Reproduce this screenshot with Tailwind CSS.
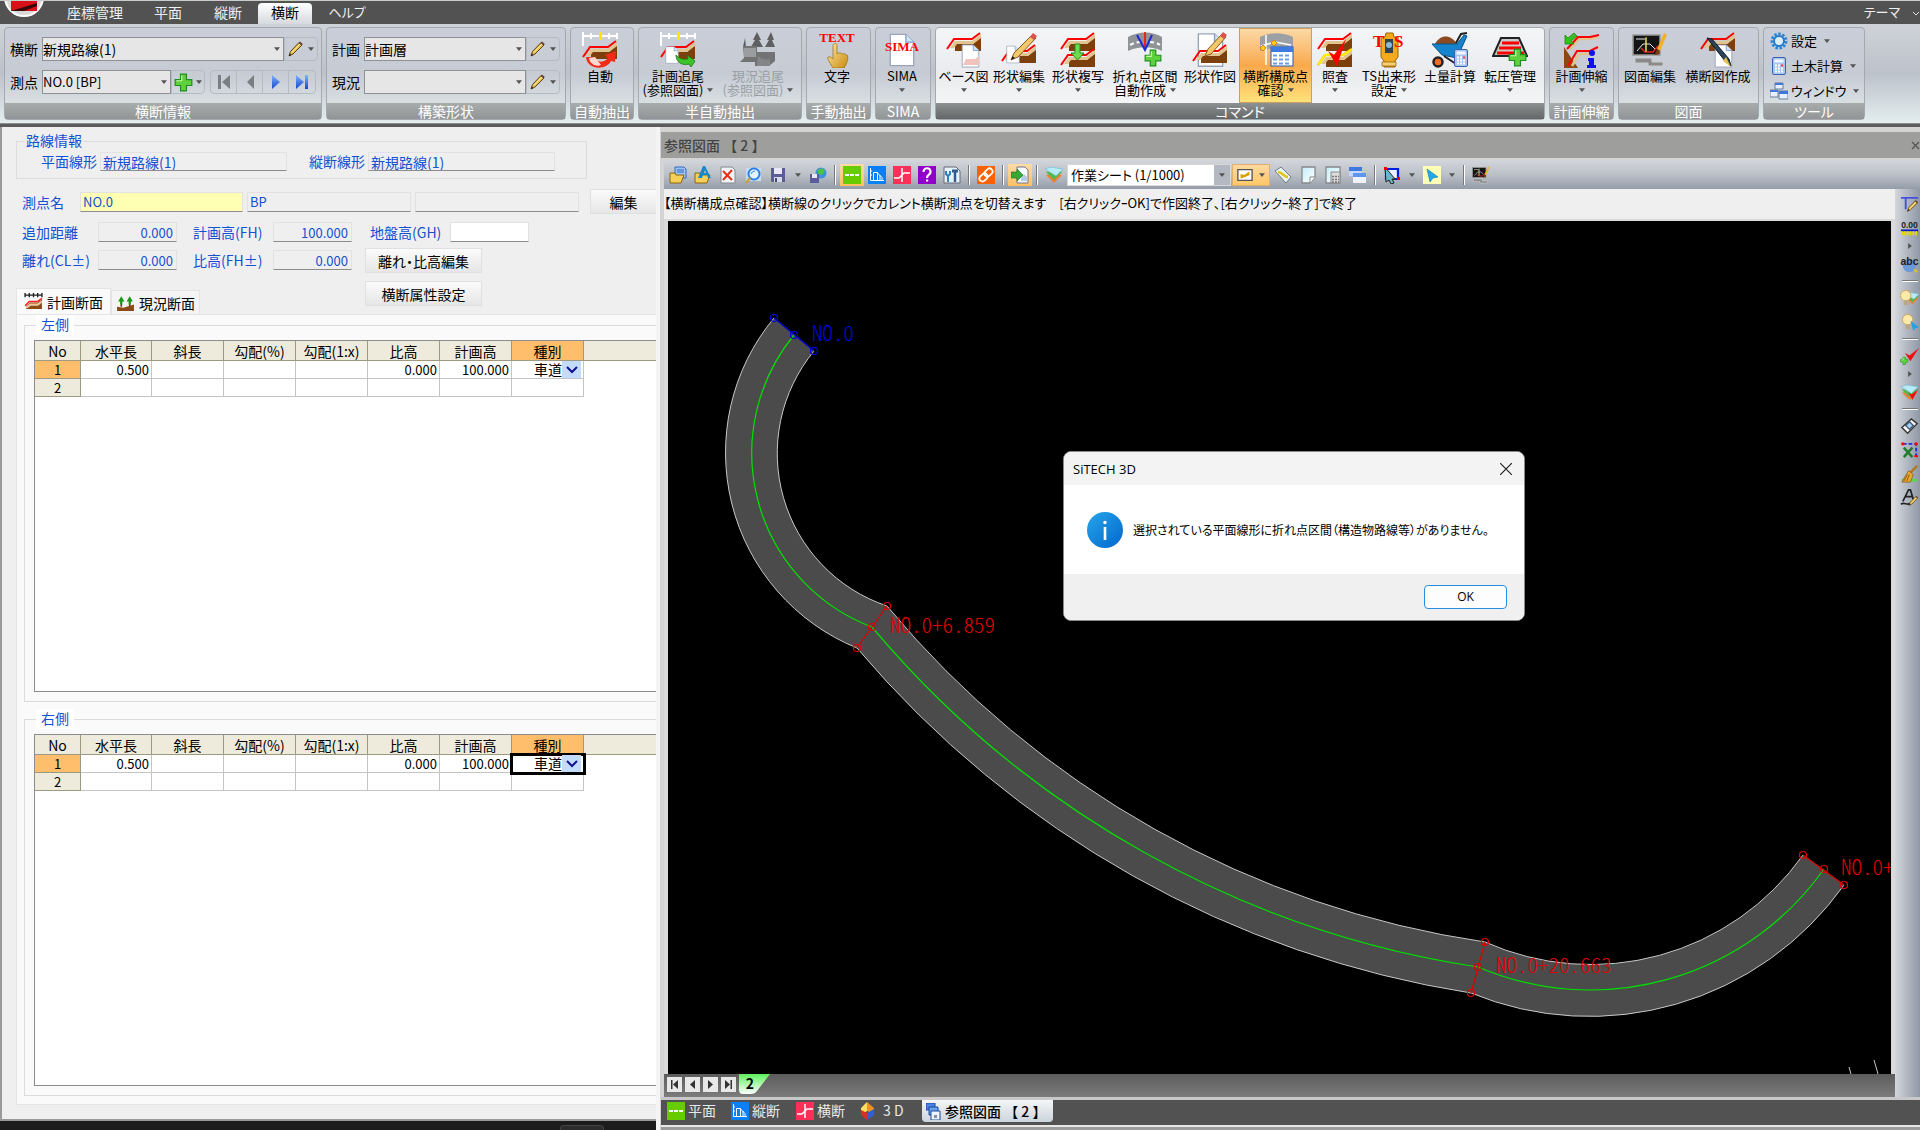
<!DOCTYPE html>
<html lang="ja">
<head>
  <meta charset="UTF-8" />
  <meta name="viewport" content="width=device-width, initial-scale=1.0" />
  <title>SiTECH 3D</title>
  <script src="https://cdn.jsdelivr.net/npm/@tailwindcss/browser@4"></script>
  <style>
    body {
      font-family: "Noto Sans CJK JP", sans-serif;
      font-feature-settings: "palt";
    }
    .full {
      font-feature-settings: normal;
    }
    .cad {
      font-feature-settings: "hwid";
    }
  </style>
</head>
<body class="h-screen flex flex-col overflow-hidden bg-[#efefef] text-sm leading-[18px] text-black">

  <!-- Gradients must stay rendered, so they live apart from the hidden sprite -->
  <svg class="absolute size-0">
    <defs>
      <linearGradient id="g-blue" x1="0" y1="0" x2="0" y2="1"><stop offset="0" stop-color="#7db4ff" /><stop offset="1" stop-color="#1546c8" /></linearGradient>
      <linearGradient id="g-gold" x1="0" y1="0" x2="1" y2="1"><stop offset="0" stop-color="#ffe9a0" /><stop offset="1" stop-color="#c98a10" /></linearGradient>
      <linearGradient id="g-info" x1="0" y1="0" x2="1" y2="1"><stop offset="0" stop-color="#27a5e8" /><stop offset="1" stop-color="#0067cf" /></linearGradient>
      <linearGradient id="g-tab" x1="0" y1="0" x2="0" y2="1"><stop offset="0" stop-color="#5cf05c" /><stop offset="1" stop-color="#ffffff" /></linearGradient>
      <linearGradient id="g-sheet" x1="0" y1="0" x2="1" y2="1"><stop offset="0" stop-color="#c4f0fa" /><stop offset="1" stop-color="#ffffff" /></linearGradient>
    </defs>
  </svg>

  <!-- Icon sprite -->
  <svg class="hidden">
    <!-- shared parts -->
    <symbol id="sec" viewBox="0 0 36 20" overflow="visible"><path d="M9 12h18l8-7v14H9z" fill="#7d3f0c" /><path d="M4 16 9 9h17l9-7v4l-8 6H11l-3 4z" fill="#e2c48e" /><path d="M1 17 8 7h18l8-6" fill="none" stroke="#f00" stroke-width="2" /></symbol>
    <symbol id="page" viewBox="0 0 20 26" overflow="visible"><path d="M1 1h12l6 6v18H1z" fill="#fff" stroke="#9aa4b8" /><path d="M13 1v6h6" fill="#cfe6fb" stroke="#7f9cc4" /></symbol>
    <symbol id="pencil" viewBox="0 0 16 16"><path d="M1 15 2.500 10.500 11 1.500l3 2.500L5 13z" fill="#e8bc48" stroke="#5a4418" /><path d="M10.500 2 12 .6l2.800 2.300L13.500 4.500z" fill="#6b4038" /><path d="M1 15l.8-2.600 1.600 1.500z" fill="#222" /><path d="M4 11.500 12 3" stroke="#fff4b8" /></symbol>
    <symbol id="plus" viewBox="0 0 16 16"><path d="M5.500 1h5v4.500H15v5h-4.500V15h-5v-4.500H1v-5h4.500z" fill="#5fd13c" stroke="#1d8f1d" /><path d="M6.500 2v4.500H2" fill="none" stroke="#c9f7b0" /></symbol>
    <symbol id="ruler" viewBox="0 0 36 14"><path d="M1 0v14M1 4h34M9 1v6M27 1v6M35 1v6" stroke="#fff" stroke-width="2" fill="none" /><path d="M17 0h3v8h-3z" fill="#ffe600" /></symbol>
    <symbol id="calc" viewBox="0 0 14 18"><rect x=".5" y=".5" width="13" height="17" rx="1.500" fill="#a9c4ee" stroke="#3d63b0" /><rect x="2.500" y="2.500" width="9" height="3" fill="#f2f7ff" /><path d="M3 8.500h8M3 11.500h8M3 14.500h8" stroke="#fff" stroke-width="2" stroke-dasharray="2 1" /><path d="M9 8.500h2" stroke="#e33" stroke-width="2" /></symbol>
    <symbol id="dn" viewBox="0 0 8 5"><path d="M0 0h8L4 5z" fill="#555" /></symbol>
    <symbol id="rt" viewBox="0 0 5 8"><path d="M0 0v8l5-4z" fill="#555" /></symbol>

    <!-- ribbon icons, 36 x 36 -->
    <symbol id="r-auto" viewBox="0 0 36 36"><use href="#ruler" width="36" height="14" /><use href="#sec" y="8" width="36" height="20" /><path d="M4 25c1 13 20 14 25 4l4 1 1-11-11 4 3 3c-5 6-12 4-13-1z" fill="#f22a16" /><path d="M7 26c1 7 8 9 12 7l-6-8z" fill="#ffd9d0" /></symbol>
    <symbol id="r-plan" viewBox="0 0 36 36"><use href="#ruler" width="36" height="14" /><use href="#sec" y="8" width="36" height="20" /><use href="#page" x="5" y="14" width="14" height="18" /><path d="M16 23c3 4 9 5 12 4l-1-4 8 6-4 6-2-3c-7 2-13-2-13-9z" fill="#3fc32b" stroke="#15780f" stroke-width=".8" /></symbol>
    <symbol id="r-curr" viewBox="0 0 36 36"><path d="M3 15l2-9 1 9M17 0l-4 8h2l-4 7h12l-4-7h2zM31 0l-4 8h2l-4 7h10l-3-7h2z" fill="#444" /><path d="M3 14h14v6h18v9l-6 5H15v-4H0l4-4z" fill="#5e5e5e" /><path d="M4 16h12v9H4z" fill="#929292" /><path d="M18 24c4 4 8 4 12 3v7H17z" fill="#747474" /></symbol>
    <symbol id="r-text" viewBox="0 0 36 36"><text x="18" y="10" text-anchor="middle" font-family="Liberation Serif" font-weight="bold" font-size="13" fill="#f00">TEXT</text><path d="M14 13c1-2 4-2 4 0v9c2-2 4-1 5 0 3-1 4 1 5 1 2 2 0 9-3 13H14c-2-4-6-8-5-11 2-1 4 1 5 2z" fill="url(#g-gold)" stroke="#9a6a10" stroke-width=".7" /></symbol>
    <symbol id="r-sima" viewBox="0 0 36 36"><use href="#page" x="5" y="1" width="26" height="34" /><text x="18" y="19" text-anchor="middle" font-family="Liberation Serif" font-weight="bold" font-size="13" fill="#f00">SIMA</text></symbol>
    <symbol id="r-base" viewBox="0 0 36 36"><use href="#sec" width="36" height="20" /><use href="#page" x="15" y="12" width="19" height="24" /><path d="M17 33l3-6h9l4-3v9z" fill="#f0c4bc" /></symbol>
    <symbol id="r-edit" viewBox="0 0 36 36"><use href="#sec" y="12" width="36" height="20" /><use href="#page" x="5" y="13" width="14" height="19" /><path d="M10 28l3-7L31 3l4 3-18 19z" fill="#f3c86b" stroke="#8a5a20" /><path d="M29 5l3-4 4 3-3 4z" fill="#d9534f" /><path d="M10 28l1.500-4 2.500 2z" fill="#222" /></symbol>
    <symbol id="r-copy" viewBox="0 0 36 36"><use href="#sec" width="36" height="20" /><use href="#sec" y="16" width="36" height="20" /><path d="M15 12h5v9h4l-6.500 7L11 21h4z" fill="#6ddc4c" stroke="#1d8f1d" /></symbol>
    <symbol id="r-fold" viewBox="0 0 36 36"><path d="M1 5c11-6 24-6 34 0v14c-10-5-24-5-34 0z" fill="#8f9396" /><path d="M3 13c4-2 7-3 10-3M23 10c4 0 7 1 10 3" stroke="#fff" stroke-width="2" stroke-dasharray="4 3" fill="none" /><path d="M18 0v18" stroke="#f00" stroke-width="1.500" /><path d="M10 3l8 15 7-15" stroke="#1b2bd8" stroke-width="2" fill="none" /><use href="#plus" x="17" y="17" width="18" height="18" /></symbol>
    <symbol id="r-draw" viewBox="0 0 36 36"><use href="#page" x="5" y="0" width="27" height="36" /><use href="#sec" y="12" width="36" height="20" /><path d="M13 24l3-7L30 2l4 3-15 17z" fill="#f3c86b" stroke="#8a5a20" /><path d="M28 4l3-4 4 3-3 4z" fill="#d9534f" /></symbol>
    <symbol id="r-conf" viewBox="0 0 36 36"><path d="M2 5c10-5 23-5 33 0v14c-10-4-23-4-33 0z" fill="#9ba0a4" /><path d="M8 3v30M3 14l14-4 16 3" stroke="#fff" stroke-width="1.500" fill="none" /><path d="M2 16l3-3 3 3-3 3zM13 11l3-3 3 3-3 3z" fill="#ffcf20" stroke="#e08000" /><rect x="13" y="15" width="22" height="19" fill="#fff" stroke="#2458b8" /><path d="M13 15h22v5H13z" fill="#3e7be0" /><path d="M15 23.500h18M15 27.500h18M15 31.500h18" stroke="#6e9be8" stroke-width="2" stroke-dasharray="4 2" /></symbol>
    <symbol id="r-chk" viewBox="0 0 36 36"><use href="#sec" width="36" height="20" /><use href="#sec" y="16" width="36" height="20" /><path d="M1 33l7-10h18l9-6" stroke="#ffee00" stroke-width="2.400" fill="none" /><path d="M11 19l6 4L29 7l-9 27z" fill="#f00" /></symbol>
    <symbol id="r-ts" viewBox="0 0 36 36"><path d="M10 5h4l1-4h7l1 4h4v20l-3 4v6H13v-6l-3-4z" fill="#f3ab1e" stroke="#9a6408" /><rect x="14" y="7" width="8" height="14" fill="#33424f" /><circle cx="18" cy="13" r="3" fill="#8fb8e0" /><path d="M11 30h14v4H11z" fill="#f8d070" stroke="#8a5a08" stroke-width=".7" /><text x="2" y="15" font-family="Liberation Serif" font-weight="bold" font-size="17" fill="#f00">T</text><text x="23" y="15" font-family="Liberation Serif" font-weight="bold" font-size="17" fill="#f00">S</text></symbol>
    <symbol id="r-soil" viewBox="0 0 36 36"><path d="M3 12C8 2 19 2 25 12l-4 4H6z" fill="#8b4a22" /><path d="M0 12h25l7-9 3 1-10 22-15-3z" fill="#1684cc" stroke="#075487" /><path d="M24 11l5-9 6-1M12 24l12 8" stroke="#222" stroke-width="2" fill="none" /><circle cx="6" cy="30" r="4.500" fill="#f06a28" stroke="#222" stroke-width="2.500" /><use href="#calc" x="22" y="17" width="14" height="18" /></symbol>
    <symbol id="r-roll" viewBox="0 0 36 36"><path d="M9 6h18l8 18H1z" fill="#c9c9c9" stroke="#222" stroke-width="2" /><path d="M10 11h17M7 16h22M5 21h27" stroke="#f00" stroke-width="3" /><use href="#plus" x="16" y="16" width="19" height="19" /></symbol>
    <symbol id="r-stretch" viewBox="0 0 36 36"><path d="M0 36V15l14 21z" fill="#8a4a14" /><path d="M6 18l9-11h11l8-2M8 34l7-12h12" stroke="#e2c48e" stroke-width="2.500" fill="none" /><path d="M3 17l11-12h12l9-2M4 34l9-15h13l8-4" stroke="#f00" stroke-width="2" fill="none" /><path d="M10 1 4 6 1 3v9h9L7 9l6-5z" fill="#34c41e" stroke="#12780a" stroke-width=".7" /><circle cx="28" cy="21" r="3" fill="#1010f0" /><path d="M24 26h6v7h2v3h-9v-3h2v-4h-1z" fill="#1010f0" /></symbol>
    <symbol id="r-zu" viewBox="0 0 36 36"><rect x="1" y="3" width="27" height="20" fill="#151515" stroke="#999" stroke-width="1.500" /><path d="M4 7h9M14 6v13M5 19l6-7h7l5 5" stroke="#e8e8e8" fill="none" /><path d="M9 16l4 4h8l5-6" stroke="#e02020" fill="none" stroke-width="1.500" /><path d="M14 5v15" stroke="#e8e020" /><path d="M3 26h17v4h11v4H16v-3H3z" fill="#8a8a8a" stroke="#ccc" /><path d="M32 1l3 2-7 16-3-2z" fill="#f2b028" /><path d="M25 17l3 2c-1 4-3 4-6 4 2-2 2-4 3-6z" fill="#7a3d10" /></symbol>
    <symbol id="r-make" viewBox="0 0 36 36"><use href="#sec" width="36" height="20" /><use href="#page" x="14" y="12" width="19" height="24" /><path d="M7 6l5 1 17 20 2 7-6-5z" fill="#2b4658" stroke="#0c1c28" /><path d="M26 25l5 10-8-6z" fill="#e8c050" /></symbol>

    <!-- small icons, 18 x 18 -->
    <symbol id="t-open" viewBox="0 0 18 18"><path d="M6 1h9l2 2v9H6z" fill="#9cc4f8" stroke="#3468b8" /><path d="M8 4h7M8 6h7" stroke="#3468b8" /><path d="M1 7h5l1 2h8l-3 8H1z" fill="#f6cf58" stroke="#8a6410" /></symbol>
    <symbol id="t-opena" viewBox="0 0 18 18"><path d="M1 7h5l1 2h9l-3 8H1z" fill="#f6cf58" stroke="#8a6410" /><path d="M4 12 9 0h2l6 12h-3l-1-3H9l-1 3zM10 7h2l-1-3z" fill="#1888c8" /></symbol>
    <symbol id="t-del" viewBox="0 0 18 18"><path d="M2 1h11l3 3v13H2z" fill="#eef5fb" stroke="#888" /><path d="M4 5l9 9M13 4l-9 10" stroke="#e83018" stroke-width="2" /></symbol>
    <symbol id="t-find" viewBox="0 0 18 18"><path d="M2 2h15v13H2z" fill="#c4dcf8" /><circle cx="10" cy="8" r="5.500" fill="#e4f6ff" stroke="#2a80e8" stroke-width="2" /><path d="M7 8q1-3 4-3" stroke="#2a80e8" fill="none" /><path d="M6 12l-4 5" stroke="#c8a040" stroke-width="2.500" /></symbol>
    <symbol id="t-save" viewBox="0 0 18 18"><path d="M2 2h14v14H3l-1-1z" fill="#5b5a9c" /><path d="M5 2h8v6H5z" fill="#e8e8f8" /><path d="M5 11h8v5H5z" fill="#d8d8e8" /><path d="M6 12h2v4H6z" fill="#444488" /></symbol>
    <symbol id="t-net" viewBox="0 0 18 18"><circle cx="12" cy="7" r="5.500" fill="#3f8fe0" /><path d="M9 4l4-2 3 3-3 4-4-1z" fill="#4cc04c" /><path d="M1 8h9v9H1z" fill="#5b5a9c" /><path d="M3 8h5v4H3z" fill="#e8e8f8" /></symbol>
    <symbol id="t-green" viewBox="0 0 18 18"><path d="M0 0h18v18H0z" fill="#66cc00" /><path d="M2 9h14" stroke="#fff" stroke-width="2" stroke-dasharray="4 1" /></symbol>
    <symbol id="t-blue" viewBox="0 0 18 18"><path d="M0 0h18v18H0z" fill="#0a80f8" /><path d="M2.500 2v12.500H16M5.500 14V6.500h4V14M9 6.500l5 5V14M12 9v5M2 5h2M2 9h2" stroke="#fff" fill="none" /></symbol>
    <symbol id="t-red" viewBox="0 0 18 18"><path d="M0 0h18v18H0z" fill="#fa3058" /><path d="M9 2v14M1 12h5l5-5h6" stroke="#fff" stroke-width="1.500" fill="none" /></symbol>
    <symbol id="t-help" viewBox="0 0 18 18"><path d="M0 0h18v18H0z" fill="#9000c8" /><path d="M5.500 6c0-5 7-5 7 0 0 3-3.500 2.500-3.500 6" stroke="#fff" stroke-width="2.200" fill="none" /><path d="M8 13.500h2.200v2H8z" fill="#fff" /></symbol>
    <symbol id="t-tool" viewBox="0 0 18 18"><path d="M1 1h12l4 4v12H1z" fill="#e6f2fb" stroke="#667" /><path d="M12 6v10" stroke="#345a90" stroke-width="2.500" /><path d="M9 5h6" stroke="#345a90" stroke-width="3" /><path d="M5 9v7M3 5v3l2 2 2-2V5" stroke="#3080c0" stroke-width="2" fill="none" /></symbol>
    <symbol id="t-link" viewBox="0 0 18 18"><path d="M0 0h18v18H0z" fill="#ff6000" /><g transform="rotate(-45 9 9)" fill="none" stroke="#fff" stroke-width="1.800"><rect x="1" y="6" width="9" height="6" rx="3" /><rect x="8" y="6" width="9" height="6" rx="3" /></g></symbol>
    <symbol id="t-imp" viewBox="0 0 18 18"><path d="M6 1h8l3 3v13H6z" fill="#f4faff" stroke="#778" /><path d="M10 11l3-3 3 3v4h-6z" fill="#b8cce0" /><path d="M0 6h6V3l6 6-6 6v-3H0z" fill="#34a834" stroke="#176f17" stroke-width=".6" /></symbol>
    <symbol id="t-layer" viewBox="0 0 18 18"><path d="M1 9l8 8 8-8-5-1z" fill="#f08038" /><path d="M1 6l8 8 8-8-4-2z" fill="#52b848" /><path d="M0 3l6-2 12 2-7 7z" fill="#b8eaf8" stroke="#6ab8d0" stroke-width=".6" /></symbol>
    <symbol id="t-map" viewBox="0 0 18 18"><path d="M1 3h16v12H1z" fill="#fff" stroke="#555" stroke-width="1.500" /><path d="M4 8l4 1 6-4v4l-4 2-6 2z" fill="#d8a000" /></symbol>
    <symbol id="t-tilt" viewBox="0 0 18 18"><path d="M1 5l6-4 10 10-5 6z" fill="#e4f8f0" stroke="#778" /><path d="M4 6c4 0 6 5 10 5" stroke="#e8c010" stroke-width="2.500" fill="none" /></symbol>
    <symbol id="t-sheet" viewBox="0 0 18 18"><path d="M3 1h13v10l-5 6H3z" fill="url(#g-sheet)" stroke="#888" stroke-width="1.300" /><path d="M11 17v-6h5" fill="#fff" stroke="#888" /></symbol>
    <symbol id="t-shcalc" viewBox="0 0 18 18"><path d="M2 1h14v16H2z" fill="url(#g-sheet)" stroke="#888" stroke-width="1.300" /><path d="M7 6h9v11H7z" fill="#ddd" stroke="#888" /><path d="M8 10.500h7M8 13.500h7M8 16h7" stroke="#777" stroke-dasharray="2 1" stroke-width="1.500" /></symbol>
    <symbol id="t-wins" viewBox="0 0 18 18"><path d="M0 1h13v9H0z" fill="#c4d8fc" /><path d="M0 1h13v4H0z" fill="#3f78e0" /><path d="M4 7h13v10H4z" fill="#eef4ff" /><path d="M4 7h13v4H4z" fill="#5f95ee" /></symbol>
    <symbol id="t-sel" viewBox="0 0 18 18"><path d="M3 3h12v10H3z" fill="#e8f0ff" stroke="#0018e0" stroke-width="2.200" /><path d="M2 1l10 12-3 0 2 4-3 1-2-4-3 2z" fill="#68b8c8" stroke="#222" /><path d="M1 1h3v3H1zM14 11h3v3h-3z" fill="#e00" /></symbol>
    <symbol id="t-cur" viewBox="0 0 18 18"><path d="M0 0h18v18H0z" fill="#ffffb8" /><path d="M4 3l11 8-5 1-3 4z" fill="#20a8e8" stroke="#0878b0" stroke-width=".6" /></symbol>

    <!-- side bar icons, 20 x 20 -->
    <symbol id="s-pen" viewBox="0 0 20 20"><path d="M1 3h18M6 3v12" stroke="#4850e0" stroke-width="2" /><use href="#pencil" x="7" y="5" width="13" height="13" /></symbol>
    <symbol id="s-dim" viewBox="0 0 20 20"><text x="10" y="9" text-anchor="middle" font-family="Liberation Sans" font-weight="bold" font-size="9" fill="#222">0.00</text><path d="M1 12h18" stroke="#1018c8" stroke-width="2" /><path d="M1 15h18" stroke="#e8d800" stroke-width="4" stroke-dasharray="2 1" /></symbol>
    <symbol id="s-abc" viewBox="0 0 20 20"><circle cx="10" cy="11" r="7" fill="#6a98d8" /><text x="10" y="11" text-anchor="middle" font-family="Liberation Sans" font-weight="bold" font-size="11" fill="#222">abc</text><path d="M15 15l3 3" stroke="#e0c020" stroke-width="2.500" /></symbol>
    <symbol id="s-bulb1" viewBox="0 0 20 20"><use href="#t-layer" x="6" y="3" width="14" height="14" /><circle cx="6" cy="7" r="5.500" fill="#ffe9a8" stroke="#c8a860" /><path d="M4 12h5v5H4z" fill="#b8a888" /></symbol>
    <symbol id="s-bulb2" viewBox="0 0 20 20"><circle cx="8" cy="7" r="5.500" fill="#ffe9a8" stroke="#c8a860" /><path d="M6 12h5v5H6z" fill="#b8a888" /><path d="M11 8l9 7-4 1-2 3z" fill="#28a0e0" /></symbol>
    <symbol id="s-chk1" viewBox="0 0 20 20"><path d="M5 6l5 3L20 1l-9 14z" fill="#f01010" /><use href="#plus" y="10" width="9" height="9" /></symbol>
    <symbol id="s-chk2" viewBox="0 0 20 20"><use href="#t-layer" x="1" y="1" width="18" height="18" /><path d="M9 10l3 2 7-5-6 11z" fill="#f01010" /></symbol>
    <symbol id="s-erase" viewBox="0 0 20 20"><path d="M2 11 12 2l6 5L8 17z" fill="#f8f8f8" stroke="#333" stroke-width="1.500" /><path d="M5 9l5-5 5 5-5 5z" fill="#3a5878" /><path d="M7 9l3-3 3 3-3 3z" fill="#a8d0f0" /></symbol>
    <symbol id="s-cut" viewBox="0 0 20 20"><path d="M3 3h14v13" stroke="#2030e0" stroke-width="2" fill="none" stroke-dasharray="4 2" /><path d="M4 7l9 10M13 7 4 17" stroke="#1f7a2a" stroke-width="2.500" /><circle cx="3" cy="3" r="1.800" fill="#f00" /><circle cx="17" cy="3" r="1.800" fill="#f00" /><path d="M15 16h4" stroke="#f00" stroke-width="2" /></symbol>
    <symbol id="s-broom" viewBox="0 0 20 20"><path d="M2 16h16" stroke="#58d848" stroke-width="3" /><path d="M18 1l-7 7" stroke="#b07820" stroke-width="2.500" /><path d="M9 6l5 4-3 8H2z" fill="#e8a830" stroke="#8a5a10" stroke-width=".8" /><path d="M10 10l-3 7M8 10l-4 7" stroke="#8a5a10" /></symbol>
    <symbol id="s-font" viewBox="0 0 20 20"><path d="M3 13 9 1h2l3 10M6 8h7M1 16c4-3 6 2 10-1" stroke="#222" stroke-width="1.800" fill="none" /><use href="#pencil" x="9" y="7" width="11" height="11" /></symbol>
  </svg>

  <!-- Menu tabs -->
  <header class="relative h-6 shrink-0 overflow-hidden border-t border-[#c8cccc] bg-[#525252] text-[#f0f0f0] flex items-end">
    <svg class="absolute -top-6 left-1 size-10" viewBox="0 0 40 40"><circle cx="20" cy="20" r="19" fill="#d8d8d8" stroke="#fff" stroke-width="2" /><path d="M7 8h26v26H7z" fill="#d81018" /><path d="M7 34l26-8v3L20 34z" fill="#3a0808" /></svg>
    <nav class="flex flex-1 items-end pl-[52px]">
      <a href="#" class="h-[21px] w-[86px] text-center">座標管理</a>
      <a href="#" class="h-[21px] w-[60px] text-center">平面</a>
      <a href="#" class="h-[21px] w-[60px] text-center">縦断</a>
      <a href="#" class="h-[21px] w-[54px] rounded-t bg-linear-to-b from-white to-[#d6dade] text-center text-black">横断</a>
      <a href="#" class="h-[21px] w-[70px] text-center text-[13px]">ヘルプ</a>
    </nav>
    <button class="flex h-[21px] items-start gap-3 text-[13px]">テーマ<svg class="mt-2 h-[5px] w-2" viewBox="0 0 8 5"><path d="M1 1l3 3 3-3" stroke="#ddd" fill="none" /></svg></button>
  </header>

  <!-- Ribbon -->
  <div id="ribbon" class="flex h-[99px] shrink-0 gap-1 bg-linear-to-b from-[#cfd2d8] via-[#bcc2cb] to-[#e4eeee] pt-[3px] pb-[3px] pl-1">
    <section class="flex w-[318px] shrink-0 flex-col rounded border border-[#a4a9af] bg-linear-to-b from-[#c9ced8] via-[#c6cbd4] to-[#e2eaea]">
      <div class="flex flex-1 flex-col justify-center gap-[9px] pl-[5px]">
        <div class="flex h-6 items-center">
          <label for="cross" class="w-8">横断</label>
          <div class="relative h-6 w-[242px]">
            <select id="cross" class="h-6 w-full appearance-none border border-[#8e9296] bg-[#e6e6e6]"><option>新規路線(1)</option></select>
            <svg class="pointer-events-none absolute top-[10px] right-1 h-1 w-[6px]"><use href="#dn" /></svg>
          </div>
          <button class="flex h-6 w-[34px] items-center justify-center gap-1 rounded-r border border-[#b4bcc2]" aria-label="横断編集"><svg class="size-4"><use href="#pencil" /></svg><svg class="h-1 w-[6px]"><use href="#dn" /></svg></button>
        </div>
        <div class="flex h-6 items-center">
          <label for="station" class="w-8">測点</label>
          <div class="relative h-6 w-[129px]">
            <select id="station" class="h-6 w-full appearance-none border border-[#8e9296] bg-[#e6e6e6] text-[13px]"><option>NO.0 [BP]</option></select>
            <svg class="pointer-events-none absolute top-[10px] right-1 h-1 w-[6px]"><use href="#dn" /></svg>
          </div>
          <button class="flex h-6 w-[34px] items-center justify-center gap-[3px] rounded-r border border-[#b4bcc2]" aria-label="測点追加"><svg class="size-[19px]"><use href="#plus" /></svg><svg class="h-1 w-[6px]"><use href="#dn" /></svg></button>
          <div class="ml-[5px] flex h-6 divide-x divide-[#b4bcc2] rounded border border-[#b4bcc2]">
            <button class="flex w-[26px] items-center justify-center" aria-label="先頭"><svg class="size-4" viewBox="0 0 16 16"><path d="M2 1h3v14H2zM14 1v14L6 8z" fill="#7c7f82" /></svg></button>
            <button class="flex w-[26px] items-center justify-center" aria-label="前へ"><svg class="size-4" viewBox="0 0 16 16"><path d="M12 1v14L5 8z" fill="#7c7f82" /></svg></button>
            <button class="flex w-[26px] items-center justify-center" aria-label="次へ"><svg class="size-4" viewBox="0 0 16 16"><path d="M4 1v14l8-7z" fill="url(#g-blue)" /></svg></button>
            <button class="flex w-[26px] items-center justify-center" aria-label="末尾"><svg class="size-4" viewBox="0 0 16 16"><path d="M2 1v14l8-7zM11 1h3v14h-3z" fill="url(#g-blue)" /></svg></button>
          </div>
        </div>
      </div>
      <h2 class="h-4 bg-linear-to-b from-[#a9acac] to-[#929595] text-center leading-4 text-white">横断情報</h2>
    </section>
    <section class="flex w-[240px] shrink-0 flex-col rounded border border-[#a4a9af] bg-linear-to-b from-[#c9ced8] via-[#c6cbd4] to-[#e2eaea]">
      <div class="flex flex-1 flex-col justify-center gap-[9px] pl-[5px]">
        <div class="flex h-6 items-center">
          <label for="plan" class="w-8">計画</label>
          <div class="relative h-6 w-[162px]">
            <select id="plan" class="h-6 w-full appearance-none border border-[#8e9296] bg-[#e6e6e6]"><option>計画層</option></select>
            <svg class="pointer-events-none absolute top-[10px] right-1 h-1 w-[6px]"><use href="#dn" /></svg>
          </div>
          <button class="flex h-6 w-[34px] items-center justify-center gap-1 rounded-r border border-[#b4bcc2]" aria-label="計画編集"><svg class="size-4"><use href="#pencil" /></svg><svg class="h-1 w-[6px]"><use href="#dn" /></svg></button>
        </div>
        <div class="flex h-6 items-center">
          <label for="current" class="w-8">現況</label>
          <div class="relative h-6 w-[162px]">
            <select id="current" class="h-6 w-full appearance-none border border-[#8e9296] bg-[#e6e6e6]"><option></option></select>
            <svg class="pointer-events-none absolute top-[10px] right-1 h-1 w-[6px]"><use href="#dn" /></svg>
          </div>
          <button class="flex h-6 w-[34px] items-center justify-center gap-1 rounded-r border border-[#b4bcc2]" aria-label="現況編集"><svg class="size-4"><use href="#pencil" /></svg><svg class="h-1 w-[6px]"><use href="#dn" /></svg></button>
        </div>
      </div>
      <h2 class="h-4 bg-linear-to-b from-[#a9acac] to-[#929595] text-center leading-4 text-white">構築形状</h2>
    </section>
  </div>
  <div class="h-1 shrink-0 border-t border-[#8a8d8d] bg-[#5c5c5c]"></div>

  <main class="flex min-h-0 flex-1">
    <!-- Left: cross section data -->
    <div class="flex w-[656px] shrink-0 flex-col bg-[#1c1c1c]">
      <div class="flex min-h-0 flex-1 flex-col border-b-2 border-l-2 border-[#9a9a9a] bg-[#efefef] pt-1 pl-[14px] text-[#1450d2]">
        <fieldset class="mr-[69px] flex border border-[#dcdcdc] pt-px pb-[7px] pl-6">
          <legend class="-ml-4 h-5 px-[1px]">路線情報</legend>
          <label for="hline" class="w-[59px]">平面線形</label>
          <input id="hline" readonly value="新規路線(1)" class="h-[19px] w-[187px] border border-[#e2e2e2] border-b-[#8c8c8c] px-[2px] leading-[17px]" />
          <label for="vline" class="ml-[22px] w-[59px]">縦断線形</label>
          <input id="vline" readonly value="新規路線(1)" class="h-[19px] w-[187px] border border-[#e2e2e2] border-b-[#8c8c8c] px-[2px] leading-[17px]" />
        </fieldset>
        <div class="mt-[10px] flex items-center gap-1 pl-[6px]">
          <label for="sname" class="w-[54px]">測点名</label>
          <input id="sname" value="NO.0" class="h-5 w-[163px] border border-[#e2e2e2] border-b-[#8c8c8c] bg-[#ffffb4] px-[2px] text-[13px]" />
          <input aria-label="測点名2" readonly value="BP" class="h-5 w-[164px] border border-[#e2e2e2] border-b-[#8c8c8c] px-[2px] text-[13px]" />
          <input aria-label="測点名3" readonly class="h-5 w-[164px] border border-[#e2e2e2] border-b-[#8c8c8c] px-[2px] text-[13px]" />
          <button class="ml-[7px] h-[25px] flex-1 border border-r-0 border-[#e0e0e0] bg-linear-to-b from-[#fbfbfb] to-[#e6e6e6] text-black">編集</button>
        </div>
        <div class="mt-2 flex">
          <div class="flex w-[349px] flex-col">
            <div class="flex items-center pl-[6px]">
              <label for="add" class="w-[76px]">追加距離</label>
              <input id="add" readonly value="0.000" class="h-5 w-[79px] border border-[#e2e2e2] border-b-[#8c8c8c] px-[3px] text-right text-[13px]" />
              <label for="fh" class="ml-4 w-20">計画高(FH)</label>
              <input id="fh" readonly value="100.000" class="h-5 w-[79px] border border-[#e2e2e2] border-b-[#8c8c8c] px-[3px] text-right text-[13px]" />
            </div>
            <div class="mt-2 flex items-center pl-[6px]">
              <label for="cl" class="w-[76px]">離れ(CL±)</label>
              <input id="cl" readonly value="0.000" class="h-5 w-[79px] border border-[#e2e2e2] border-b-[#8c8c8c] px-[3px] text-right text-[13px]" />
              <label for="fhd" class="ml-4 w-20">比高(FH±)</label>
              <input id="fhd" readonly value="0.000" class="h-5 w-[79px] border border-[#e2e2e2] border-b-[#8c8c8c] px-[3px] text-right text-[13px]" />
            </div>
            <div class="mt-auto flex items-end text-black">
              <button class="flex h-[26px] w-[95px] items-center justify-center gap-1 border border-b-0 border-[#e4e4e4] bg-[#fafafa]">
                <svg class="size-[19px]" viewBox="0 0 18 18"><path d="M1 3h16M1 1v4M5 1v4M9 1v4M13 1v4M17 1v4" stroke="#222" stroke-width="1.300" /><path d="M2 16V13l4-3h7l4-3v9z" fill="#8b4a14" /><path d="M2 15l4-3h7l4-3" stroke="#efc8a0" stroke-width="2" fill="none" /><path d="M1 13l4-4h8l4-3" stroke="#f22" stroke-width="1.500" fill="none" /></svg>計画断面
              </button>
              <button class="flex h-6 w-[89px] items-center justify-center gap-1 border border-b-0 border-[#e4e4e4] bg-[#f4f4f4]">
                <svg class="size-[19px]" viewBox="0 0 18 18"><path d="M5 5v8M13 5v8" stroke="#6a3a10" stroke-width="1.500" /><path d="M5 3l3 5H6v3H4V8H2zM13 3l3 5h-2v3h-2V8h-2z" fill="#189818" /><path d="M1 13l6 1 10-3v6H1z" fill="#8b4a14" /></svg>現況断面
              </button>
            </div>
          </div>
          <div class="flex flex-1 flex-col items-start pb-2">
            <div class="flex items-center pl-[5px]">
              <label for="gh" class="w-20">地盤高(GH)</label>
              <input id="gh" class="h-5 w-[79px] border border-[#e2e2e2] border-b-[#8c8c8c] bg-white px-[3px] text-right text-[13px]" />
            </div>
            <button class="mt-[6px] h-[25px] w-[117px] border border-[#e0e0e0] bg-linear-to-b from-[#fbfbfb] to-[#e6e6e6] text-black">離れ・比高編集</button>
            <button class="mt-2 h-[25px] w-[117px] border border-[#e0e0e0] bg-linear-to-b from-[#fbfbfb] to-[#e6e6e6] text-black">横断属性設定</button>
          </div>
        </div>
        <div id="sides" class="mb-[14px] flex min-h-0 flex-1 flex-col gap-[7px] border border-r-0 border-[#e4e4e4] bg-[#fafafa] pb-2 pl-[7px]"></div>
      </div>
      <div class="flex h-[9px] shrink-0 items-end pl-[560px]"><div class="h-[5px] w-11 rounded-t border border-b-0 border-[#444] bg-[#2c2c2c]"></div></div>
    </div>

    <!-- Right: reference drawing -->
    <div class="flex min-w-0 flex-1 flex-col border-l-4 border-[#f4f4f4] bg-[#d4d4d4] pt-[5px] pl-[1px]">
      <div class="flex h-[26px] shrink-0 items-center justify-between bg-[#9e9f9d] pl-[3px] font-medium text-[#444]">
        <h2 class="full">参照図面 【 2 】</h2>
        <button aria-label="閉じる"><svg class="size-[9px]" viewBox="0 0 9 9"><path d="M1 1l7 7M8 1 1 8" stroke="#555" stroke-width="1.300" /></svg></button>
      </div>
      <div id="toolbar" class="mt-[2px] ml-[3px] flex h-[29px] shrink-0 items-center gap-px bg-linear-to-b from-[#d2d5da] via-[#bcc1c8] to-[#949ca8] pl-[2px]"></div>
      <div class="ml-[3px] flex min-h-0 flex-1">
        <div class="flex min-w-0 flex-1 flex-col bg-[#efefef]">
          <p class="h-[30px] shrink-0 pt-[5px] text-[13px] leading-[18px] whitespace-nowrap">【横断構成点確認】横断線のクリックでカレント横断測点を切替えます　[右クリックｰOK]で作図終了、[右クリックｰ終了]で終了</p>
          <div class="relative min-h-0 flex-1 overflow-hidden border-t-2 border-r-4 border-l-4 border-[#dadada] bg-black">
            <svg class="absolute top-0 left-0 h-full w-full" viewBox="668 221 1223 853" preserveAspectRatio="xMinYMin slice">
              <g fill="#4b4b4b">
                <path d="M774 318A211 211 0 0 0 857 648L887 606A161 161 0 0 1 814 351Z" />
                <path d="M857 648A1008 1008 0 0 0 1471 993L1485 942A958 958 0 0 1 887 606Z" />
                <path d="M1471 993A312 312 0 0 0 1844 885L1803 855A260 260 0 0 1 1485 942Z" />
              </g>
              <path d="M774 318A211 211 0 0 0 857 648A1008 1008 0 0 0 1471 993A312 312 0 0 0 1844 885M1803 855A260 260 0 0 1 1485 942A958 958 0 0 1 887 606A161 161 0 0 1 814 351" fill="none" stroke="#c8c8c8" />
              <path d="M794 335A186 186 0 0 0 872 627A983 983 0 0 0 1478 967A286 286 0 0 0 1824 869" fill="none" stroke="#00e000" stroke-width="1.200" />
              <g fill="none" stroke="#0000e0" stroke-width="1.200"><path d="M774 318l40 33" /><circle cx="774" cy="318" r="3.500" /><circle cx="794" cy="335" r="3.500" /><circle cx="814" cy="351" r="3.500" /></g>
              <g fill="none" stroke="#e00000" stroke-width="1.200">
                <path d="M857 648l30-42M1471 993l14-51M1803 855l41 30" />
                <circle cx="857" cy="648" r="3.500" /><circle cx="872" cy="627" r="3.500" /><circle cx="887" cy="606" r="3.500" />
                <circle cx="1471" cy="993" r="3.500" /><circle cx="1478" cy="967" r="3.500" /><circle cx="1485" cy="942" r="3.500" />
                <circle cx="1803" cy="855" r="3.500" /><circle cx="1824" cy="869" r="3.500" /><circle cx="1844" cy="885" r="3.500" />
              </g>
              <path d="M1849 1067l2 7M1874 1060l4 14" stroke="#c8c8c8" fill="none" />
              <g class="cad" font-size="21" font-weight="300">
                <text x="812" y="341" fill="#0000e0">NO.0</text>
                <text x="890" y="633" fill="#e00000">NO.0+6.859</text>
                <text x="1496" y="973" fill="#e00000">NO.0+20.663</text>
                <text x="1841" y="875" fill="#e00000">NO.0+</text>
              </g>
            </svg>

            <!-- Message box -->
            <div role="dialog" aria-labelledby="dlg-title" class="absolute top-[230px] left-[395px] flex h-[170px] w-[462px] flex-col overflow-hidden rounded-lg border border-[#8a8a8a] bg-white">
              <div class="flex h-[33px] items-center justify-between bg-[#f3f3f3] pr-3 pl-[9px]">
                <h3 id="dlg-title" class="font-['Open_Sans'] text-[13px]">SiTECH 3D</h3>
                <button aria-label="閉じる"><svg class="size-3" viewBox="0 0 12 12"><path d="M0 0l12 12M12 0 0 12" stroke="#222" stroke-width="1.200" /></svg></button>
              </div>
              <div class="flex flex-1 items-center gap-[10px] pl-[23px]">
                <svg class="size-9" viewBox="0 0 36 36"><circle cx="18" cy="18" r="18" fill="url(#g-info)" /><circle cx="18" cy="10.500" r="1.700" fill="#fff" /><path d="M18 15v13" stroke="#fff" stroke-width="2.600" /></svg>
                <p class="text-xs">選択されている平面線形に折れ点区間（構造物路線等）がありません。</p>
              </div>
              <div class="flex h-[46px] items-center justify-end bg-[#f0f0f0] pr-[17px]">
                <button class="h-6 w-[83px] rounded border border-[#2a8ee0] bg-[#fdfdfd] font-['Open_Sans'] text-xs leading-5">OK</button>
              </div>
            </div>
          </div>
          <!-- Sheet tabs -->
          <div class="flex h-[23px] shrink-0 items-start gap-[3px] bg-linear-to-b from-[#5c5c5c] to-[#7c7c7c] pl-[3px]">
            <button class="mt-[3px] flex size-[15px] items-center justify-center bg-[#e8e8e8]" aria-label="先頭シート"><svg class="size-[9px]" viewBox="0 0 9 9"><path d="M1 0h1.500v9H1zM8 0v9L3 4.500z" fill="#333" /></svg></button>
            <button class="mt-[3px] flex size-[15px] items-center justify-center bg-[#e8e8e8]" aria-label="前シート"><svg class="size-[9px]" viewBox="0 0 9 9"><path d="M7 0v9L2 4.500z" fill="#333" /></svg></button>
            <button class="mt-[3px] flex size-[15px] items-center justify-center bg-[#e8e8e8]" aria-label="次シート"><svg class="size-[9px]" viewBox="0 0 9 9"><path d="M2 0v9l5-4.500z" fill="#333" /></svg></button>
            <button class="mt-[3px] flex size-[15px] items-center justify-center bg-[#e8e8e8]" aria-label="最終シート"><svg class="size-[9px]" viewBox="0 0 9 9"><path d="M1 0v9l5-4.500zM6.500 0H8v9H6.500z" fill="#333" /></svg></button>
            <button class="grid h-5 w-8 font-bold">
              <svg class="col-start-1 row-start-1 h-5 w-8" viewBox="0 0 32 20"><path d="M0 0h31L18 17q-2 3-6 3H4q-4 0-4-4z" fill="url(#g-tab)" /></svg>
              <span class="col-start-1 row-start-1 w-[22px]">2</span>
            </button>
          </div>
        </div>
        <div id="sidebar" class="flex w-[25px] shrink-0 flex-col items-center bg-linear-to-r from-[#d4d7dc] to-[#8f98a6] pt-[3px] pl-1"></div>
      </div>
      <!-- Window tabs -->
      <nav class="full flex h-[28px] shrink-0 items-start border-t-[3px] border-[#c8c8c8] bg-[#525252] pl-[6px] leading-[21px] text-[#e8e8e8]">
        <a href="#" class="flex w-16 items-center gap-[3px]"><svg class="size-[18px]"><use href="#t-green" /></svg>平面</a>
        <a href="#" class="flex w-[65px] items-center gap-[3px]"><svg class="size-[18px]"><use href="#t-blue" /></svg>縦断</a>
        <a href="#" class="flex w-16 items-center gap-[3px]"><svg class="size-[18px]"><use href="#t-red" /></svg>横断</a>
        <a href="#" class="flex w-[62px] items-center gap-2"><svg class="h-[18px] w-[15px]" viewBox="0 0 15 18"><path d="M7 0 1 6v7l6-4z" fill="#f8e060" /><path d="M7 0l7 6v6L7 9z" fill="#f09020" /><path d="M1 8l6 3v7l-6-5z" fill="#d83020" /><path d="M14 7l-7 4v7l7-5z" fill="#3060d0" /></svg>3 D</a>
        <a href="#" class="flex h-[22px] w-[131px] items-center gap-1 rounded-b bg-linear-to-b from-[#f4f6f8] to-[#ccd4dc] pl-1 font-medium whitespace-nowrap text-black"><svg class="h-[17px] w-[15px]" viewBox="0 0 15 17"><path d="M0 0h9v7H0z" fill="#4a84e0" stroke="#1c4a9c" /><path d="M3 4h9v8H3z" fill="#6aa0f0" stroke="#1c4a9c" /><path d="M5 8h9v9H5z" fill="#eef4ff" stroke="#1c4a9c" /><path d="M8 12h3v3H8z" fill="#88a" /></svg>参照図面 【 2 】</a>
      </nav>
      <div class="h-[5px] shrink-0 border-t-2 border-[#e8e8e8] bg-[#9c9c9c]"></div>
    </div>
  </main>

  <script>
    const ribbonGroups = [
      { title: "自動抽出", width: 64, items: [{ w: 58, icon: "r-auto", lines: ["自動"] }] },
      { title: "半自動抽出", width: 164, items: [
        { w: 78, icon: "r-plan", lines: ["計画追尾", "(参照図面)"], menu: true },
        { w: 82, icon: "r-curr", lines: ["現況追尾", "(参照図面)"], menu: true, off: true },
      ] },
      { title: "手動抽出", width: 65, items: [{ w: 60, icon: "r-text", lines: ["文字"] }] },
      { title: "SIMA", width: 56, items: [{ w: 52, icon: "r-sima", lines: ["SIMA"], menu: true }] },
      { title: "コマンド", width: 610, light: true, items: [
        { w: 55, icon: "r-base", lines: ["ベース図"], menu: true },
        { w: 56, icon: "r-edit", lines: ["形状編集"], menu: true },
        { w: 62, icon: "r-copy", lines: ["形状複写"], menu: true },
        { w: 72, icon: "r-fold", lines: ["折れ点区間", "自動作成"], menu: true },
        { w: 58, icon: "r-draw", lines: ["形状作図"] },
        { w: 73, icon: "r-conf", lines: ["横断構成点", "確認"], menu: true, on: true },
        { w: 46, icon: "r-chk", lines: ["照査"], menu: true },
        { w: 62, icon: "r-ts", lines: ["TS出来形", "設定"], menu: true },
        { w: 60, icon: "r-soil", lines: ["土量計算"] },
        { w: 60, icon: "r-roll", lines: ["転圧管理"], menu: true },
      ] },
      { title: "計画伸縮", width: 65, items: [{ w: 63, icon: "r-stretch", lines: ["計画伸縮"], menu: true }] },
      { title: "図面", width: 141, items: [
        { w: 62, icon: "r-zu", lines: ["図面編集"] },
        { w: 74, icon: "r-make", lines: ["横断図作成"] },
      ] },
    ];

    const caret = `<svg class="h-1 w-[6px] shrink-0"><use href="#dn" /></svg>`;

    function ribbonButton(b) {
      const state = b.on
        ? "border-[#c8a060] bg-linear-to-b from-[#fbd9a4] via-[#f9a94c] to-[#ffe27a]"
        : "border-transparent";
      return `
        <button style="width:${b.w}px" class="flex shrink-0 flex-col items-center border pt-[3px] text-[13px] leading-[14px] whitespace-nowrap ${state} ${b.off ? "text-[#98a0a4]" : ""}">
          <svg class="mb-px size-9 shrink-0 ${b.off ? "opacity-80" : ""}"><use href="#${b.icon}" /></svg>
          <span>${b.lines[0]}</span>
          <span class="flex h-[14px] items-center gap-1">${b.lines[1] ? `<span>${b.lines[1]}</span>` : ""}${b.menu ? caret : ""}</span>
        </button>`;
    }

    const ribbon = document.getElementById("ribbon");
    ribbonGroups.forEach((g) => {
      const body = g.light
        ? "border-[#a4a9af] bg-linear-to-b from-[#f4f5f7] via-[#e9ebee] to-[#fbfbfb]"
        : "border-[#a4a9af] bg-linear-to-b from-[#c9ced8] via-[#c6cbd4] to-[#e2eaea]";
      const band = g.light ? "from-[#8e9191] to-[#646767]" : "from-[#a9acac] to-[#929595]";
      ribbon.insertAdjacentHTML("beforeend", `
        <section style="width:${g.width}px" class="flex shrink-0 flex-col rounded border ${body}">
          <div class="flex flex-1">${g.items.map(ribbonButton).join("")}</div>
          <h2 class="h-4 bg-linear-to-b ${band} text-center leading-4 text-white">${g.title}</h2>
        </section>`);
    });
    ribbon.insertAdjacentHTML("beforeend", `
      <section class="flex w-[102px] shrink-0 flex-col rounded border border-[#a4a9af] bg-linear-to-b from-[#c9ced8] via-[#c6cbd4] to-[#e2eaea]">
        <div class="flex flex-1 flex-col items-start justify-center gap-[5px] pl-[6px] text-[13px]">
          <button class="flex h-5 items-center gap-[3px]"><svg class="size-[18px]" viewBox="0 0 18 18"><circle cx="9" cy="9" r="7" fill="none" stroke="#2a88d8" stroke-width="3" stroke-dasharray="2.500 1.500" /><circle cx="9" cy="9" r="5" fill="#dceefa" stroke="#2a78c8" stroke-width="2" /></svg>設定<span class="pl-1">${caret}</span></button>
          <button class="flex h-5 items-center gap-[3px]"><svg class="size-[18px]"><use href="#calc" /></svg>土木計算<span class="pl-1">${caret}</span></button>
          <button class="flex h-5 items-center gap-[3px]"><svg class="size-[18px]" viewBox="0 0 18 18"><path d="M5 1h8v6H5zM0 8h8v7H0zM9 9h9v8H9z" fill="#e8f0ff" stroke="#6a7c98" /><path d="M5 1h8v2H5zM0 8h8v2H0zM9 9h9v3H9z" fill="#3f78d8" /></svg>ウィンドウ<span class="pl-1">${caret}</span></button>
        </div>
        <h2 class="h-4 bg-linear-to-b from-[#a9acac] to-[#929595] text-center leading-4 text-white">ツール</h2>
      </section>`);

    // Section tables
    const columns = ["No", "水平長", "斜長", "勾配(%)", "勾配(1:x)", "比高", "計画高", "種別"];
    const sides = [{ title: "左側", active: false }, { title: "右側", active: true }];
    sides.forEach((s) => {
      const head = columns.map((c, i) =>
        `<th class="h-5 border-r border-b border-[#9c9a80] p-0 font-normal ${i === 7 ? "bg-[#ffbe6b]" : "bg-[#eeeadc]"}">${c}</th>`).join("");
      const empty = `<td class="border-r border-b border-[#c4c4c4]"></td>`;
      const num = (v) => `<td class="border-r border-b border-[#c4c4c4] p-0 pr-[2px] text-right text-[13px]">${v}</td>`;
      document.getElementById("sides").insertAdjacentHTML("beforeend", `
        <fieldset class="flex min-h-0 flex-1 flex-col border border-r-0 border-[#dcdcdc] pt-[5px] pb-[9px] pl-[9px]">
          <legend class="ml-[2px] h-5 bg-white px-[5px]">${s.title}</legend>
          <div class="flex-1 border border-r-0 border-[#8c8c8c] bg-white text-black">
            <table class="w-full table-fixed border-separate border-spacing-0 leading-[16px]">
              <colgroup><col class="w-[46px]" /><col class="w-[71px]" /><col class="w-[72px]" /><col class="w-[72px]" /><col class="w-[72px]" /><col class="w-[72px]" /><col class="w-[72px]" /><col class="w-[72px]" /><col /></colgroup>
              <thead><tr>${head}<th class="border-b border-[#9c9a80] bg-[#eeeadc]"></th></tr></thead>
              <tbody>
                <tr class="h-[18px]">
                  <th class="border-r border-b border-[#9c9a80] bg-[#ffbe6b] p-0 text-[13px] font-normal">1</th>
                  ${num("0.500")}${empty}${empty}${empty}${num("0.000")}${num("100.000")}
                  <td class="border-r border-b border-[#c4c4c4] p-0 ${s.active ? "outline-3 -outline-offset-1 outline-black" : ""}">
                    <div class="relative">
                      <select aria-label="${s.title}種別" class="block h-[17px] w-full appearance-none pl-[22px] leading-[17px]"><option>車道</option></select>
                      <svg class="pointer-events-none absolute top-0 right-[2px] h-[17px] w-[19px] bg-[#c4dcfb]" viewBox="0 0 19 17"><path d="M5 6l5 5 5-5" stroke="#101090" stroke-width="2" fill="none" /></svg>
                    </div>
                  </td><td></td>
                </tr>
                <tr class="h-[18px]">
                  <th class="border-r border-b border-[#9c9a80] bg-[#eeeadc] p-0 text-[13px] font-normal">2</th>
                  ${empty.repeat(7)}<td></td>
                </tr>
              </tbody>
            </table>
          </div>
        </fieldset>`);
    });

    // Drawing toolbar: "|" separator, "v" drop-down caret, "+" before a name marks an active button
    const tools = ["t-open", "t-opena", "t-del", "t-find", "t-save", "v", "t-net", "|", "+t-green", "t-blue", "t-red", "t-help", "t-tool", "|", "t-link", "|", "+t-imp", "|", "t-layer", "sheet", "map", "t-tilt", "t-sheet", "t-shcalc", "t-wins", "|", "t-sel", "v", "t-cur", "v", "|", "r-zu"];
    document.getElementById("toolbar").innerHTML = tools.map((t) => {
      if (t === "|") return `<div class="flex w-2 justify-center"><div class="h-5 w-[2px] border-r border-white bg-[#777]"></div></div>`;
      if (t === "v") return `<button aria-label="メニュー" class="flex h-6 w-[14px] items-center justify-center">${caret}</button>`;
      if (t === "sheet") return `
        <div class="relative h-[22px] w-[164px]">
          <select aria-label="作業シート" class="h-full w-full appearance-none border border-[#d8d8d8] bg-white pl-[3px] text-[13px] leading-5"><option>作業シート (1/1000)</option></select>
          <span class="pointer-events-none absolute top-px right-px flex h-5 w-4 items-center justify-center bg-[#b4b8c0]">${caret}</span>
        </div>`;
      if (t === "map") return `<button aria-label="map" class="flex h-[22px] w-[38px] items-center justify-center gap-[6px] border border-[#e0b070] bg-linear-to-b from-[#fcd8a0] to-[#ffc868]"><svg class="size-4"><use href="#t-map" /></svg>${caret}</button>`;
      const on = t.startsWith("+");
      const id = on ? t.slice(1) : t;
      return `<button aria-label="${id}" class="flex h-[22px] w-6 items-center justify-center ${on ? "bg-linear-to-b from-[#fcdca8] to-[#ffc060]" : ""}"><svg class="size-[18px]"><use href="#${id}" /></svg></button>`;
    }).join("");

    const sideTools = ["s-pen", "s-dim", "v", "s-abc", "|", "s-bulb1", "s-bulb2", "|", "s-chk1", "v", "s-chk2", "|", "s-erase", "s-cut", "s-broom", "s-font"];
    document.getElementById("sidebar").innerHTML = sideTools.map((t) => {
      if (t === "|") return `<div class="flex h-[10px] shrink-0 items-center"><div class="h-[2px] w-4 border-b border-white bg-[#777]"></div></div>`;
      if (t === "v") return `<button aria-label="メニュー" class="flex h-3 shrink-0 items-center"><svg class="h-[6px] w-1"><use href="#rt" /></svg></button>`;
      return `<button aria-label="${t}" class="flex h-6 shrink-0 items-center"><svg class="size-[19px]"><use href="#${t}" /></svg></button>`;
    }).join("");
  </script>
</body>
</html>
